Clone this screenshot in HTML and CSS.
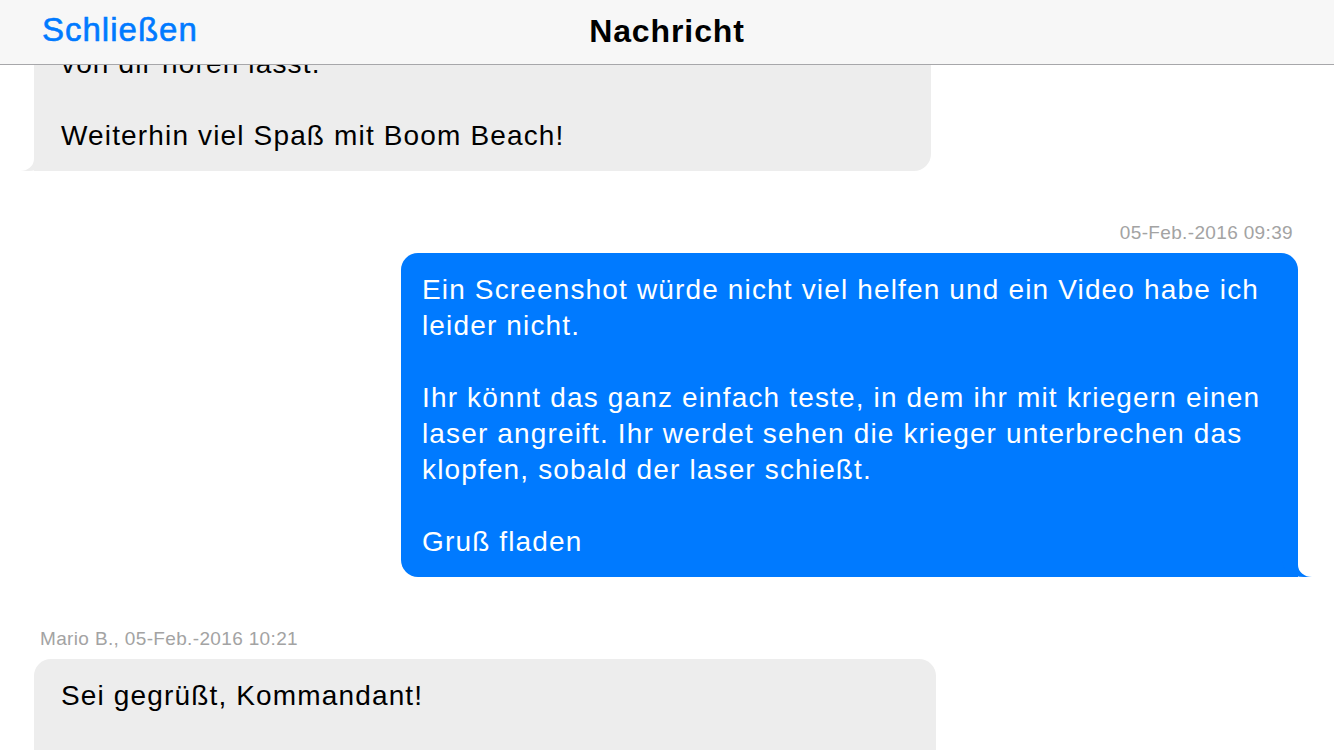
FILE: index.html
```html
<!DOCTYPE html>
<html lang="de">
<head>
<meta charset="utf-8">
<title>Nachricht</title>
<link rel="stylesheet" href="styles.css">
</head>
<body>
<header class="navbar">
  <span class="nav-close">Schließen</span>
  <span class="nav-title">Nachricht</span>
</header>
<main class="thread">
  <div class="msg msg-in">
    <div class="bubble bubble-in w-a">von dir hören lässt.<br><br>Weiterhin viel Spaß mit Boom Beach!</div>
  </div>
  <div class="msg msg-out">
    <div class="meta meta-out">05-Feb.-2016 09:39</div>
    <div class="bubble bubble-out w-a">Ein Screenshot würde nicht viel helfen und ein Video habe ich leider nicht.<br><br>Ihr könnt das ganz einfach teste, in dem ihr mit kriegern einen laser angreift. Ihr werdet sehen die krieger unterbrechen das klopfen, sobald der laser schießt.<br><br>Gruß fladen</div>
  </div>
  <div class="msg msg-in">
    <div class="meta meta-in">Mario B., 05-Feb.-2016 10:21</div>
    <div class="bubble bubble-in w-b bubble-cont">Sei gegrüßt, Kommandant!</div>
  </div>
</main>
</body>
</html>
```
FILE: styles.css
```css
html, body {
  margin: 0;
  padding: 0;
  background: #ffffff;
  overflow: hidden;
  height: 750px;
}
body {
  font-family: "Liberation Sans", Arial, sans-serif;
  color: #000;
}
.navbar {
  position: fixed;
  top: 0;
  left: 0;
  right: 0;
  height: 65px;
  background: #f7f7f7;
  border-bottom: 1px solid #a7a7aa;
  box-sizing: border-box;
  display: flex;
  align-items: center;
  justify-content: center;
  z-index: 10;
}
.nav-close {
  position: absolute;
  left: 42px;
  top: 12px;
  font-size: 33px;
  letter-spacing: 1px;
  color: #007aff;
  -webkit-text-stroke: 0.6px #007aff;
  line-height: 36px;
}
.nav-title {
  font-size: 32px;
  font-weight: 700;
  letter-spacing: 0.9px;
  line-height: 36px;
  margin-top: -2px;
}
.thread {
  display: flex;
  flex-direction: column;
  padding-top: 27px;
}
.msg {
  display: flex;
  flex-direction: column;
  margin-bottom: 50px;
}
.msg-in {
  align-items: flex-start;
  padding-left: 34px;
}
.msg-out {
  align-items: flex-end;
  padding-right: 36px;
}
.meta {
  font-size: 19px;
  line-height: 22px;
  letter-spacing: 0.35px;
  color: #a3a3a3;
  padding-top: 1px;
  margin-bottom: 9px;
}
.meta-out { padding-right: 5px; }
.meta-in { padding-left: 6px; }
.bubble {
  position: relative;
  box-sizing: border-box;
  font-size: 28px;
  letter-spacing: 1.15px;
  line-height: 36px;
  padding: 19px 18px 17px 27px;
  border-radius: 17px;
}
.bubble-cont {
  min-height: 200px;
}
.w-a { width: 897px; }
.w-b { width: 902px; }
.bubble-in {
  background: #ededed;
  color: #000;
  border-bottom-left-radius: 0;
}
.bubble-out {
  background: #007aff;
  color: #fff;
  padding-left: 21px;
  border-bottom-right-radius: 0;
}
.bubble-in::before {
  content: "";
  position: absolute;
  bottom: 0;
  left: -14px;
  width: 30px;
  height: 24px;
  background: #ededed;
  border-bottom-right-radius: 22px 16px;
}
.bubble-in::after {
  content: "";
  position: absolute;
  bottom: 0;
  left: -22px;
  width: 22px;
  height: 26px;
  background: #fff;
  border-bottom-right-radius: 14px 12px;
}
.bubble-out::before {
  content: "";
  position: absolute;
  bottom: 0;
  right: -15px;
  width: 31px;
  height: 24px;
  background: #007aff;
  border-bottom-left-radius: 22px 16px;
}
.bubble-out::after {
  content: "";
  position: absolute;
  bottom: 0;
  right: -22px;
  width: 22px;
  height: 26px;
  background: #fff;
  border-bottom-left-radius: 14px 12px;
}
```
